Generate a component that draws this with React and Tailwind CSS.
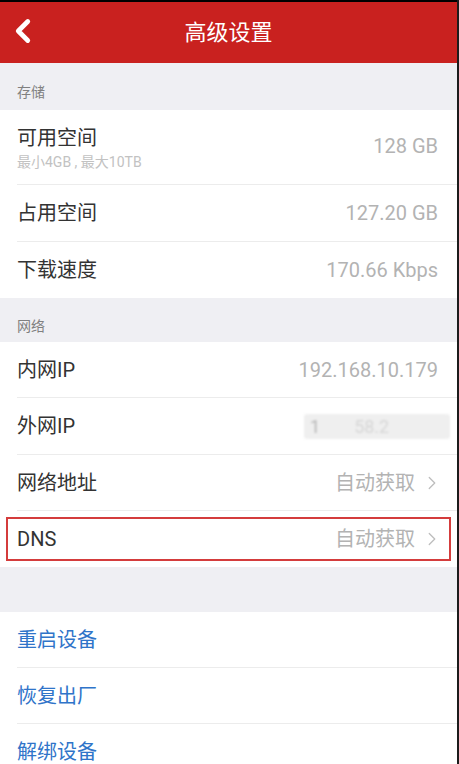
import { ChevronLeft, ChevronRight } from "lucide-react";

const font = { fontFamily: "Roboto, 'Noto Sans CJK SC', sans-serif" };

const SectionLabel = ({ text, h, pb }) => (
  <div className={`bg-[#efeff3] shrink-0 flex items-end pl-[17px] ${h} ${pb}`}>
    <span className="text-[14px] leading-[20px] text-[#808080]">{text}</span>
  </div>
);

const Row = ({ title, value, arrow, last, tall, children }) => (
  <div className="bg-white shrink-0">
    <div
      className={`ml-[17px] pr-[19px] flex items-center justify-between ${tall ? "h-[57px]" : "h-[56px]"} ${
        last ? "" : "border-b border-[#ececec]"
      }`}
    >
      <span className="text-[20px] text-[#333]">{title}</span>
      {children ? (
        children
      ) : (
        <span className="flex items-center gap-[6px] text-[20px] text-[#b3b3b3]">
          {value}
          {arrow && <ChevronRight size={22} strokeWidth={1.4} className="text-[#bdbdbd] -mr-[5px]" />}
        </span>
      )}
    </div>
  </div>
);

const ActionRow = ({ title, last }) => (
  <div className="bg-white shrink-0">
    <div
      className={`ml-[17px] h-[56px] flex items-center ${
        last ? "" : "border-b border-[#ececec]"
      }`}
    >
      <span className="text-[20px] text-[#2f74c9]">{title}</span>
    </div>
  </div>
);

export default function App() {
  return (
    <div
      className="w-[459px] h-[764px] overflow-hidden bg-[#efeff3] border-r-2 border-[#1c1c1c] flex flex-col"
      style={font}
    >
      {/* top strip + header */}
      <div className="h-[2px] bg-black shrink-0" />
      <div className="h-[61px] bg-[#c9211f] relative flex items-center justify-center shrink-0">
        <ChevronLeft
          size={38}
          strokeWidth={3}
          className="absolute left-[4px] top-[10px] text-white"
        />
        <span className="text-[22px] text-white">高级设置</span>
      </div>

      <SectionLabel text="存储" h="h-[47px]" pb="pb-[8px]" />

      <div className="bg-white shrink-0">
        <div className="ml-[17px] pr-[19px] h-[75px] flex items-center justify-between border-b border-[#ececec]">
          <div className="flex flex-col pt-[2px]">
            <span className="text-[20px] leading-[27px] text-[#333]">可用空间</span>
            <span className="text-[14px] leading-[20px] text-[#c2c2c2]">最小4GB , 最大10TB</span>
          </div>
          <span className="text-[20px] text-[#b3b3b3] pb-[3px]">128 GB</span>
        </div>
      </div>
      <Row title="占用空间" value="127.20 GB" tall />
      <Row title="下载速度" value="170.66 Kbps" last />

      <SectionLabel text="网络" h="h-[44px]" pb="pb-[6px]" />

      <Row title="内网IP" value="192.168.10.179" />
      <Row title="外网IP" tall>
        <div className="-mr-[12px] w-[146px] h-[25px] bg-[#efefef] rounded-[3px] flex items-center pl-[6px] gap-[34px] text-[18px] blur-[1px]">
          <span className="text-[#b5b5b5]">1</span>
          <span className="text-[#d6d6d6]">58.2</span>
        </div>
      </Row>
      <Row title="网络地址" value="自动获取" arrow />
      <div className="relative shrink-0">
        <Row title="DNS" value="自动获取" arrow last />
        <div className="absolute left-[6px] right-[6px] top-[6px] bottom-[6px] border-2 border-[#d43c3c] pointer-events-none" />
      </div>

      <div className="h-[45px] bg-[#efeff3] shrink-0" />

      <ActionRow title="重启设备" />
      <ActionRow title="恢复出厂" />
      <ActionRow title="解绑设备" last />
    </div>
  );
}
